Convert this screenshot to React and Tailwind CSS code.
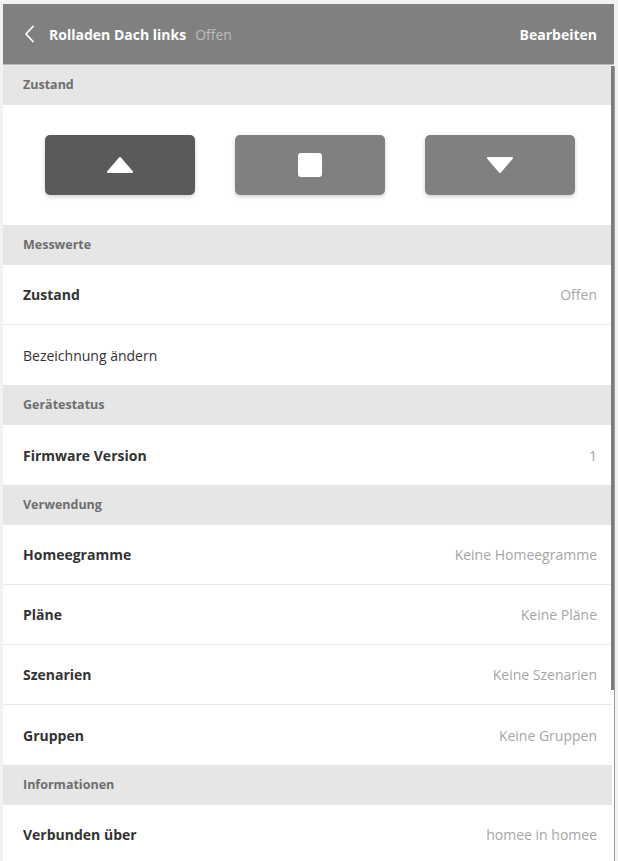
import React from "react";

const font = { fontFamily: '"Open Sans", "Noto Sans", sans-serif' };

function SectionHeader({ children }) {
  return (
    <div className="shrink-0 h-[40px] bg-[#e6e6e6] flex items-center pl-[20px] text-[12.5px] font-bold text-[#6e6e6e]">
      {children}
    </div>
  );
}

function Row({ label, value, bold = true, last = false }) {
  return (
    <div
      className={
        "shrink-0 h-[60px] flex items-center justify-between pl-[20px] pr-[15px] bg-white " +
        (last ? "" : "border-b border-[#e8e8e8]")
      }
    >
      <span className={"text-[14px] text-[#333] " + (bold ? "font-bold" : "font-normal")}>{label}</span>
      {value && <span className="text-[14px] text-[#a6a6a6]">{value}</span>}
    </div>
  );
}

function CtrlButton({ dark, children }) {
  return (
    <button
      className={
        "w-[150px] h-[60px] rounded-[5px] flex items-center justify-center shadow-[0_2px_4px_rgba(0,0,0,0.18)] " +
        (dark ? "bg-[#5a5a5a]" : "bg-[#808080]")
      }
    >
      {children}
    </button>
  );
}

export default function App() {
  return (
    <div className="w-[618px] h-[861px] overflow-hidden bg-[#f2f2f2] pt-[4px] pl-[3px] relative" style={font}>
      <div className="w-[611px] flex flex-col relative">
        <div className="shrink-0 h-[62px] bg-[#808080] flex items-center justify-between pl-[20px] pr-[17px] border-b-2 border-[#b8b8b8] mb-[-1px]">
          <div className="flex items-center">
            <svg width="14" height="18" viewBox="0 0 14 18" className="mr-[12px]">
              <path d="M10 1.5 L3 9 L10 16.5" fill="none" stroke="white" strokeWidth="1.8" strokeLinecap="round" strokeLinejoin="round" />
            </svg>
            <span className="text-white font-bold text-[14px]">Rolladen Dach links</span>
            <span className="text-[#bdbdbd] text-[14px] ml-[9px]">Offen</span>
          </div>
          <span className="text-white font-bold text-[14px]">Bearbeiten</span>
        </div>
        <div className="bg-white flex flex-col pr-[2px]">
          <div className="shrink-0 h-[40px] bg-[#e6e6e6] flex items-center pl-[20px] pt-[1px] text-[12.5px] font-bold text-[#6e6e6e]">
            Zustand
          </div>
          <div className="shrink-0 h-[120px] flex items-center justify-center gap-[40px] pl-[4px]">
            <CtrlButton dark>
              <svg width="30" height="20" viewBox="0 0 30 20">
                <path d="M15 3 L27 17 L3 17 Z" fill="white" stroke="white" strokeWidth="2" strokeLinejoin="round" />
              </svg>
            </CtrlButton>
            <CtrlButton>
              <div className="w-[24px] h-[24px] bg-white rounded-[3px]" />
            </CtrlButton>
            <CtrlButton>
              <svg width="30" height="20" viewBox="0 0 30 20">
                <path d="M3 3 L27 3 L15 17 Z" fill="white" stroke="white" strokeWidth="2" strokeLinejoin="round" />
              </svg>
            </CtrlButton>
          </div>
          <SectionHeader>Messwerte</SectionHeader>
          <Row label="Zustand" value="Offen" />
          <Row label="Bezeichnung ändern" bold={false} last />
          <SectionHeader>Gerätestatus</SectionHeader>
          <Row label="Firmware Version" value="1" last />
          <SectionHeader>Verwendung</SectionHeader>
          <Row label="Homeegramme" value="Keine Homeegramme" />
          <Row label="Pläne" value="Keine Pläne" />
          <Row label="Szenarien" value="Keine Szenarien" />
          <Row label="Gruppen" value="Keine Gruppen" last />
          <SectionHeader>Informationen</SectionHeader>
          <Row label="Verbunden über" value="homee in homee" />
        </div>
        <div className="absolute right-0 top-[62px] w-[3px] h-[624px] bg-[#7c7c7c]" />
      </div>
      <div className="absolute left-[614px] top-[66px] w-[1px] h-[795px] bg-[#9a9a9a]" />
    </div>
  );
}
